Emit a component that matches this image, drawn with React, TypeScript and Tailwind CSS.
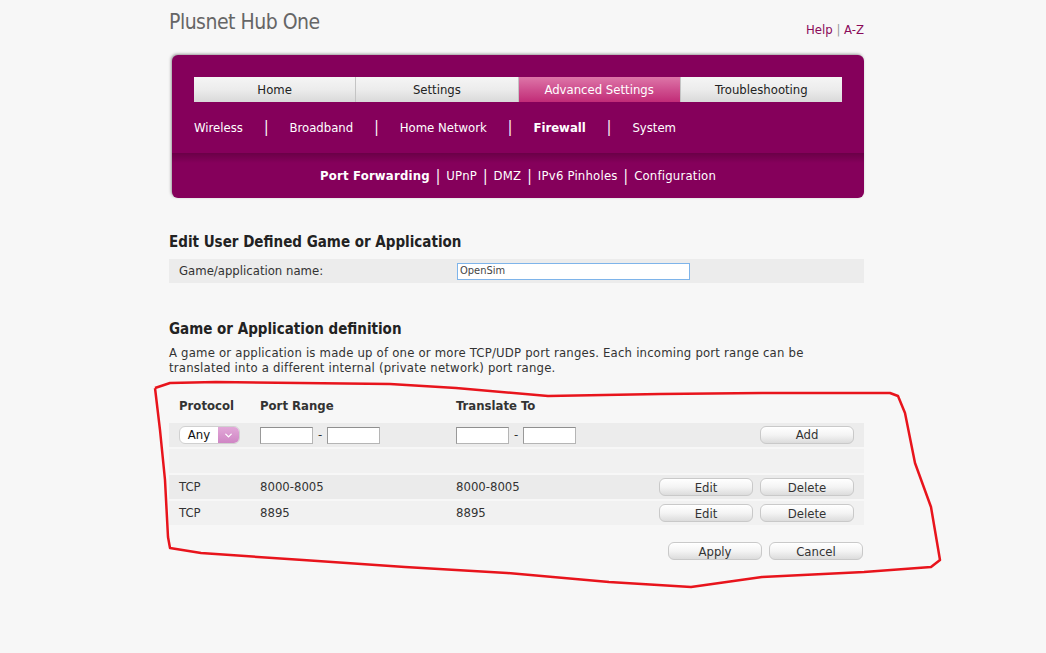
import { ChevronDown } from 'lucide-react';

const TABS = ['Home', 'Settings', 'Advanced Settings', 'Troubleshooting'];
const SUB = ['Wireless', 'Broadband', 'Home Network', 'Firewall', 'System'];
const SUB3 = ['Port Forwarding', 'UPnP', 'DMZ', 'IPv6 Pinholes', 'Configuration'];

const RULES = [
  { protocol: 'TCP', range: '8000-8005', to: '8000-8005' },
  { protocol: 'TCP', range: '8895', to: '8895' },
];

const font = "font-['DejaVu_Sans_Condensed','DejaVu_Sans',sans-serif]";

function HubButton({ label }: { label: string }) {
  return (
    <button className="h-[18px] w-[94px] rounded-[6px] border border-[#c9c9c9] bg-gradient-to-b from-white via-[#f4f4f4] to-[#dcdcdc] text-[13px] leading-none text-[#333] shadow-[inset_0_1px_0_#fff]">
      {label}
    </button>
  );
}

function PortBox() {
  return <div className="h-[17px] w-[53px] border border-[#b5b5b5] border-t-[#8f8f8f] border-l-[#999] bg-white" />;
}

// hand-drawn red outline over the table area
function Scribble() {
  const pts = [
    [155, 388], [170, 383], [216, 382], [300, 383], [390, 384], [456, 388], [548, 396], [660, 394],
    [762, 393], [890, 393], [898, 396], [905, 413], [915, 463], [931, 507], [940, 560], [931, 567],
    [864, 572], [762, 577], [691, 587], [609, 582], [507, 573], [405, 567], [303, 560], [201, 553],
    [170, 548], [168, 537], [165, 480], [160, 430], [155, 388],
  ];
  return (
    <svg className="pointer-events-none absolute left-0 top-0" width="1046" height="653">
      <polyline
        points={pts.map(p => p.join(',')).join(' ')}
        fill="none"
        stroke="#e8141c"
        strokeWidth="2.5"
        strokeLinejoin="round"
      />
    </svg>
  );
}

export default function App() {
  return (
    <div className={`relative min-h-[653px] w-full bg-[#f7f7f7] ${font} text-[#333]`}>
      <div className="w-[696px] pl-[1px] pt-[8px]" style={{ marginLeft: 168 }}>
        {/* header */}
        <div className="flex items-end justify-between">
          <h1 className="text-[21px] leading-[28px] tracking-[-0.5px] text-[#666]">Plusnet Hub One</h1>
          <div className="-mb-[3px] text-[13px] text-[#8a0a5a]">
            Help <span className="text-[#999]">|</span> A-Z
          </div>
        </div>

        {/* nav panel */}
        <div className="mt-[19px] ml-[3px] w-[692px] overflow-hidden rounded-[6px] bg-[#85005b] shadow-[-1px_-1px_3px_#9a9a9a]">
          <div className="px-[22px] pt-[22px]">
            <div className="flex h-[25px]">
              {TABS.map((t, i) => (
                <div
                  key={t}
                  className={`flex flex-1 items-center justify-center text-[13px] ${
                    i === 2
                      ? 'bg-gradient-to-b from-[#dd75a8] via-[#cf4f8f] to-[#c12a77] text-white'
                      : 'bg-gradient-to-b from-[#f5f5f5] via-[#ececec] to-[#d9d9d9] text-[#222]'
                  } ${i > 0 ? 'border-l border-[#c4c4c4]' : ''}`}
                >
                  {t}
                </div>
              ))}
            </div>
            <div className="flex h-[51px] items-center text-[13px] text-white">
              {SUB.map((s, i) => (
                <div key={s} className="flex items-center">
                  {i > 0 && <span className="mx-[21px] text-[15px]">|</span>}
                  <span className={s === 'Firewall' ? 'font-bold' : ''}>{s}</span>
                </div>
              ))}
            </div>
          </div>
          <div className="h-[10px] bg-gradient-to-b from-[#6a0047] to-[#85005b]" />
          <div className="flex h-[35px] items-center justify-center pb-[10px] text-[13px] leading-[18px] text-white">
            {SUB3.map((s, i) => (
              <div key={s} className="flex items-center">
                {i > 0 && <span className="mx-[6px] text-[15px]">|</span>}
                <span className={`tracking-[0.2px] ${i === 0 ? 'font-bold' : ''}`}>{s}</span>
              </div>
            ))}
          </div>
        </div>

        {/* name section */}
        <h2 className="mt-[34px] text-[15px] font-bold leading-[20px] text-[#222]">
          Edit User Defined Game or Application
        </h2>
        <div className="mt-[7px] flex h-[24px] items-center bg-[#ececec] pl-[10px] text-[13px]">
          <span className="w-[278px]">Game/application name:</span>
          <div className="flex h-[17px] w-[233px] items-center border border-[#7eb4ea] bg-white pl-[2px] text-[11px] text-[#444]">
            OpenSim
          </div>
        </div>

        {/* definition section */}
        <h2 className="mt-[36px] text-[15px] font-bold leading-[20px] text-[#222]">
          Game or Application definition
        </h2>
        <p className="mt-[6px] text-[13px] leading-[15px] tracking-[0.2px] text-[#333]">
          A game or application is made up of one or more TCP/UDP port ranges. Each incoming port range can be
          <br />
          translated into a different internal (private network) port range.
        </p>

        <div className="mt-[16px] text-[13px]">
          <div className="flex h-[30px] items-center pl-[10px] font-bold">
            <span className="w-[81px]">Protocol</span>
            <span className="w-[196px]">Port Range</span>
            <span>Translate To</span>
          </div>
          <div className="mt-[2px] flex h-[24px] items-center bg-[#ececec] pl-[10px] pr-[10px]">
            <div className="w-[81px]">
              <div className="flex h-[18px] w-[61px] overflow-hidden rounded-[6px] border border-[#d0d0d0] bg-white">
                <span className="flex flex-1 items-center justify-center text-[13px] text-[#111]">Any</span>
                <span className="flex w-[21px] items-center justify-center bg-gradient-to-b from-[#e2a8d8] to-[#cf86c4]">
                  <ChevronDown size={11} strokeWidth={3} className="text-white" />
                </span>
              </div>
            </div>
            <div className="flex w-[196px] items-center">
              <PortBox />
              <span className="mx-[5px]">-</span>
              <PortBox />
            </div>
            <div className="flex items-center">
              <PortBox />
              <span className="mx-[5px]">-</span>
              <PortBox />
            </div>
            <div className="ml-auto">
              <HubButton label="Add" />
            </div>
          </div>
          <div className="mt-[2px] h-[24px] bg-[#f1f1f1]" />
          {RULES.map((r, i) => (
            <div
              key={i}
              className={`mt-[2px] flex h-[24px] items-center pl-[10px] pr-[10px] ${i === 0 ? 'bg-[#ebebeb]' : 'bg-[#f1f1f1]'}`}
            >
              <span className="w-[81px]">{r.protocol}</span>
              <span className="w-[196px]">{r.range}</span>
              <span>{r.to}</span>
              <div className="ml-auto flex gap-[7px]">
                <HubButton label="Edit" />
                <HubButton label="Delete" />
              </div>
            </div>
          ))}
          <div className="mt-[17px] flex justify-end gap-[7px] pr-[1px]">
            <HubButton label="Apply" />
            <HubButton label="Cancel" />
          </div>
        </div>
      </div>
      <Scribble />
    </div>
  );
}
